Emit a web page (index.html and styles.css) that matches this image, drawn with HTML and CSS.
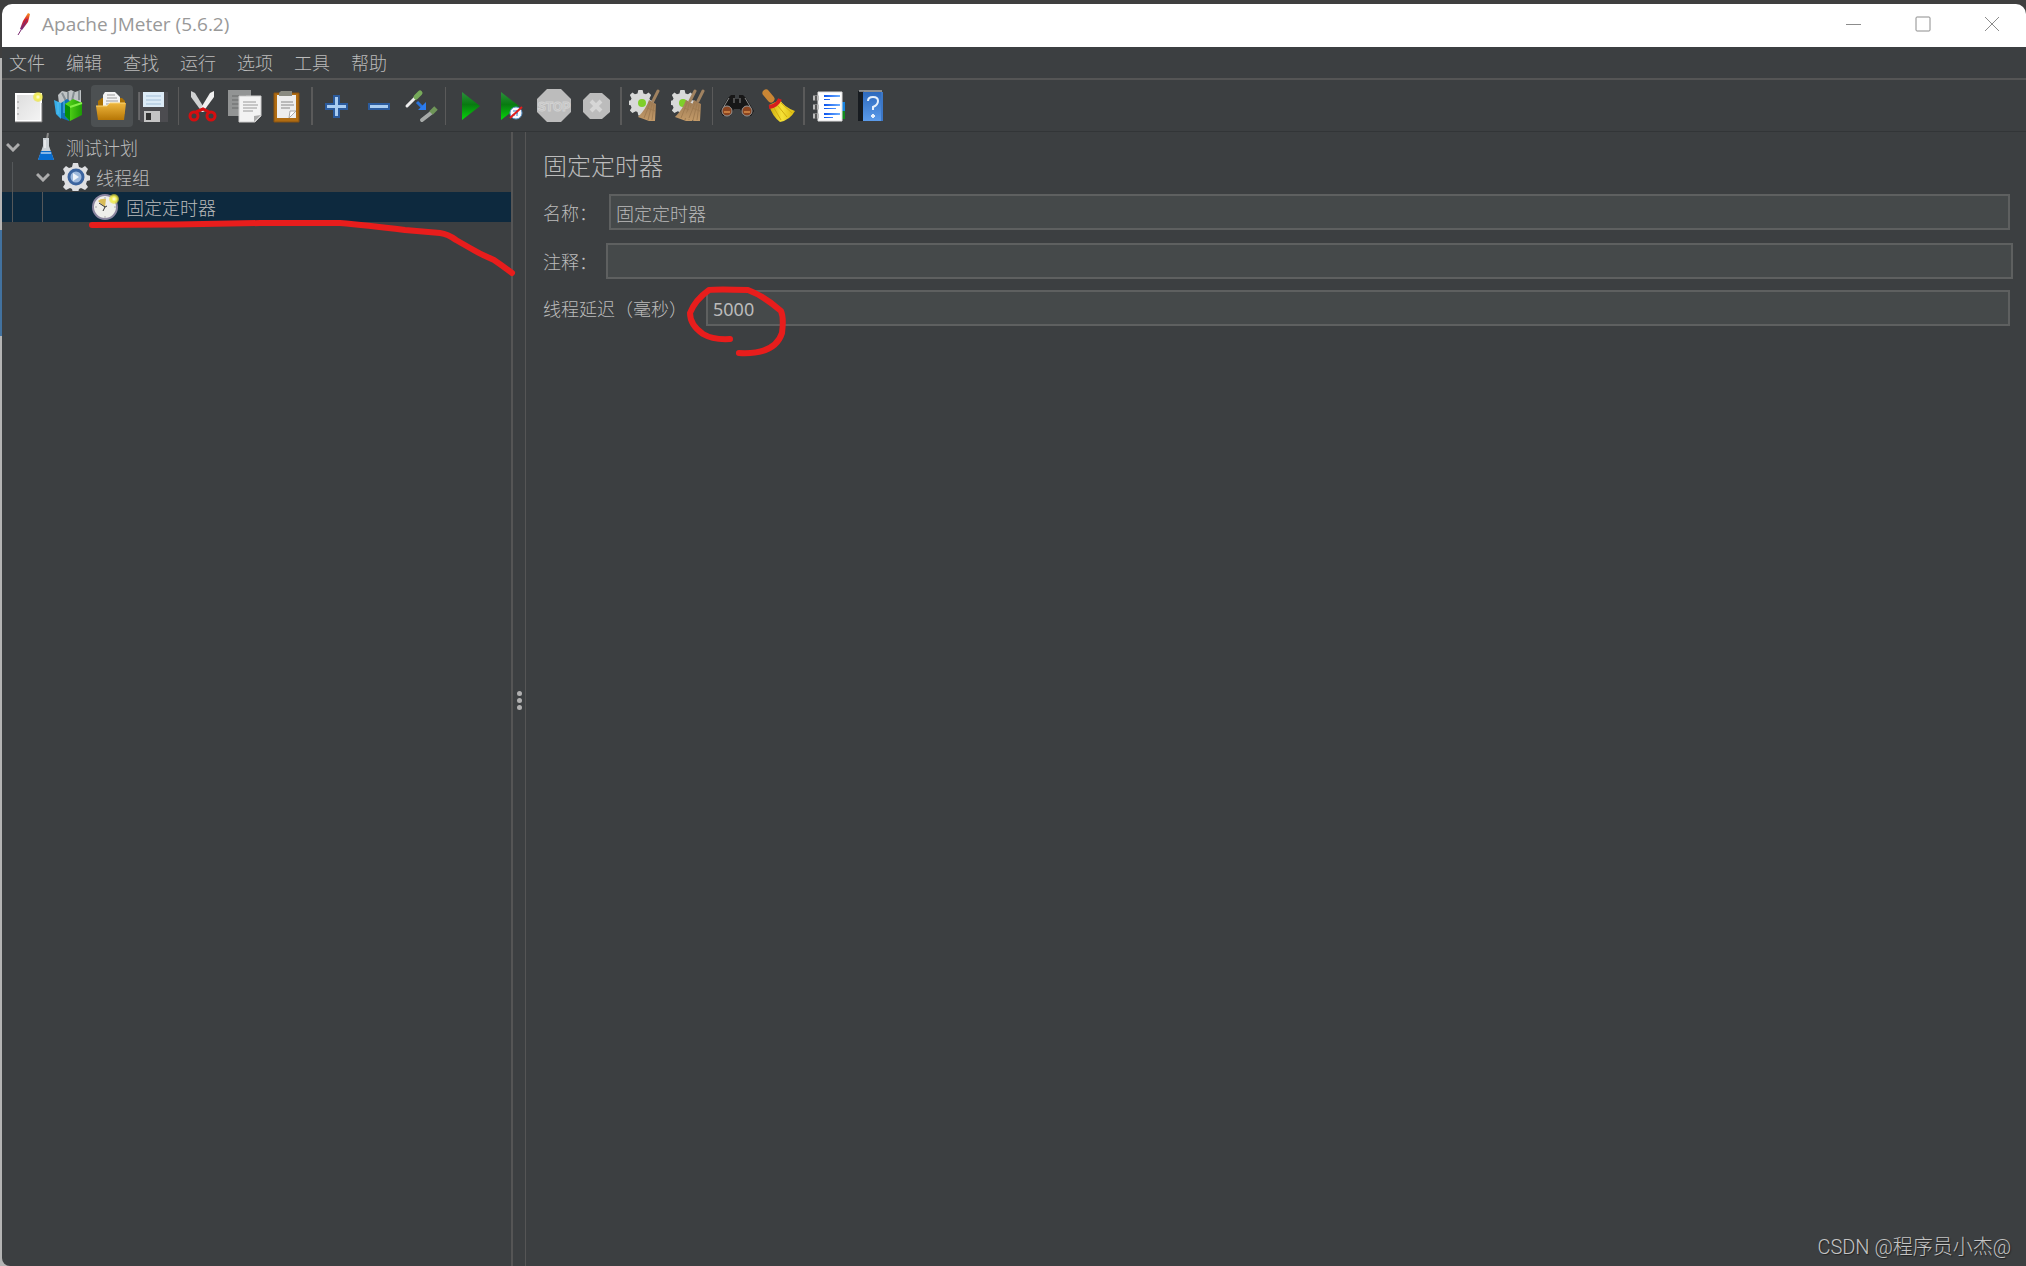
FILE: index.html
```html
<!DOCTYPE html>
<html lang="zh-CN">
<head>
<meta charset="utf-8">
<title>Apache JMeter (5.6.2)</title>
<link rel="stylesheet" href="styles.css">
</head>
<body>
<svg class="defs" aria-hidden="true">
  <defs>
    <linearGradient id="paper" x2="1" y2="1"><stop offset="0" stop-color="#ddd"/><stop offset="1" stop-color="#f4f4f4"/></linearGradient>
    <linearGradient id="gold" x2="0" y2="1"><stop offset="0" stop-color="#efb73e"/><stop offset="1" stop-color="#b67605"/></linearGradient>
    <linearGradient id="green" x2="0" y2="1"><stop offset="0" stop-color="#2c8f3c"/><stop offset=".45" stop-color="#087a10"/><stop offset="1" stop-color="#06d80a"/></linearGradient>
    <linearGradient id="leaf" x2="1" y2="0"><stop offset="0" stop-color="#5fe01c"/><stop offset="1" stop-color="#1d9a05"/></linearGradient>
    <linearGradient id="straw" x2="0" y2="1"><stop offset="0" stop-color="#9c7a55"/><stop offset="1" stop-color="#c39a68"/></linearGradient>
    <linearGradient id="book" x2="0" y2="1"><stop offset="0" stop-color="#2d69bd"/><stop offset="1" stop-color="#5b9bea"/></linearGradient>
    <linearGradient id="flame" x2="0" y2="1"><stop offset="0" stop-color="#f79a23"/><stop offset=".4" stop-color="#d9222a"/><stop offset="1" stop-color="#6d2a7d"/></linearGradient>
    <linearGradient id="line" x2="1" y2="0"><stop offset="0" stop-color="#0a53ee"/><stop offset="1" stop-color="#6fb0ff"/></linearGradient>
    <linearGradient id="yellow" x2="1" y2="0"><stop offset="0" stop-color="#c9a90c"/><stop offset=".5" stop-color="#f6e136"/><stop offset="1" stop-color="#d8b70f"/></linearGradient>
    <radialGradient id="spark"><stop offset="0" stop-color="#fffff0"/><stop offset=".5" stop-color="#f3ee55"/><stop offset="1" stop-color="#e9e030" stop-opacity=".5"/></radialGradient>
    <path id="gear" d="M11 0h5l1 4 3 1 3-2 3 3-2 4 1 2 4 1v4l-4 1-1 3 2 3-3 3-4-2-2 1-1 4h-5l-1-4-2-1-4 2-3-3 2-3-1-3-4-1v-4l4-1 1-2-2-4 3-3 3 2 3-1z"/>
    <g id="broom"><path d="M26 2 21 12" stroke="#a08260" stroke-width="3" stroke-linecap="round"/><path d="M17 11 24 15 23 32H17L6 28Q14 20 17 11z" fill="url(#straw)"/><path d="M18 14 12 29M20 15 16 31M22 16 20 31M15 19 23 22" stroke="#a07c52" fill="none"/></g>
  </defs>
</svg>

<div class="window">
  <header class="titlebar">
    <svg class="feather" width="16" height="24" viewBox="0 0 16 24" aria-hidden="true"><path d="M11 1 13 2 11 10 5 18 3 17 6 9z" fill="url(#flame)"/><path d="M10 7 4 18 1 23" stroke="#7a2a70" stroke-dasharray="10 2" fill="none"/></svg>
    <h1 class="app-title">Apache JMeter (5.6.2)</h1>
    <div class="window-controls">
      <button type="button" aria-label="最小化"><svg width="16" height="16" viewBox="0 0 16 16"><path d="M0 8.500H15"/></svg></button>
      <button type="button" aria-label="最大化"><svg width="16" height="16" viewBox="0 0 16 16"><rect x="1" y="1" width="14" height="14" rx="1"/></svg></button>
      <button type="button" aria-label="关闭"><svg width="16" height="16" viewBox="0 0 16 16"><path d="M1 1 15 15M15 1 1 15"/></svg></button>
    </div>
  </header>

  <nav class="menubar" aria-label="菜单">
    <button type="button">文件</button><button type="button">编辑</button><button type="button">查找</button><button type="button">运行</button><button type="button">选项</button><button type="button">工具</button><button type="button">帮助</button>
  </nav>

  <div class="toolbar" role="toolbar" aria-label="工具栏">
    <button type="button" aria-label="新建"><svg viewBox="0 0 34 34"><path d="M5 5H30V32H5z" fill="url(#paper)" stroke="#fff" stroke-width="2"/><path d="M4 33H31V14" fill="none" stroke="#777"/><path d="M6 13h2M6 19h2M6 25h2" stroke="#999"/><circle cx="27" cy="8" r="5" fill="url(#spark)"/></svg></button>
    <button type="button" aria-label="模板"><svg viewBox="0 0 34 34"><path d="M5 6 9 2 14 3 18 1 22 3 28 1V14L6 15z" fill="#bfc3c5"/><path d="M9 4 13 12M15 3V11M21 3 19 12M26 2V11" stroke="#858d91" stroke-width="2"/><path d="M1 11 8 14V30L3 25z" fill="#37aee8"/><path d="M8 14 14 10 20 14 16 17V32L8 29z" fill="#1271b5"/><path d="M11 12V24M5 13V25" stroke="#54bfee"/><path d="M12 15 20 10 29 14V26L17 32 12 27z" fill="url(#leaf)"/><path d="M12 15 17 18V32L12 27z" fill="#078e0a"/><path d="M17 18 29 14" stroke="#84ef47" stroke-width="2"/></svg></button>
    <button type="button" class="hovered" aria-label="打开"><svg viewBox="0 0 34 34"><path d="M3 12 7 9H27L30 12V25H3z" fill="#a97004"/><path d="M8 6 10 3H20L25 8V20H8z" fill="#f4f4f4"/><path d="M12 6h8M12 9h10M11 12h12M11 15h12" stroke="#9b9b9b"/><path d="M1 17H12L15 14H31L29 31H3z" fill="url(#gold)"/><path d="M1 17H12L15 14H30" stroke="#f8d377" fill="none"/></svg></button>
    <button type="button" aria-label="保存"><svg viewBox="0 0 34 34"><path d="M2 3H31V33H4L2 31z" fill="#4c4c50"/><path d="M6 3H27V18H6z" fill="#dcebf7"/><path d="M9 7H24M9 11H24M9 15H24" stroke="#a3bfd8" stroke-width="1"/><path d="M7 22H23V33H7z" fill="#c4c4c4"/><path d="M9 24h5v7H9z" fill="#333"/><path d="M2 3v28" stroke="#888"/></svg></button>
    <span class="sep"></span>
    <button type="button" aria-label="剪切"><svg viewBox="0 0 34 34"><path d="M5 2 9 4 20 22 16 23 5 8z" fill="#cfd1d1"/><path d="M28 2 24 4 13 22 17 23 28 8z" fill="#f0f0f0"/><g fill="none" stroke="#d50e10" stroke-width="3"><ellipse cx="8" cy="27" rx="4" ry="4"/><ellipse cx="25" cy="27" rx="4" ry="4"/><path d="M10 23 17 20 23 23"/></g></svg></button>
    <button type="button" aria-label="复制"><svg viewBox="0 0 34 34"><path d="M0 1H23V27H0z" fill="#929494"/><path d="M4 7H18M4 11H18M4 15H14M4 19H14" stroke="#686b6b"/><path d="M11 7H33V27L27 33H11z" fill="#f3f3f3" stroke="#ccc"/><path d="M15 13H28M15 16H30M15 19H29M15 22H25" stroke="#9a9a9a"/><path d="M33 26 26 27 26 33z" fill="#aaa"/></svg></button>
    <button type="button" aria-label="粘贴"><svg viewBox="0 0 34 34"><path d="M4 4H29V33H4z" fill="#b06c12" stroke="#885310"/><path d="M7 6H26V29H7z" fill="#eee"/><path d="M11 2H22V7H9V4z" fill="#8a8b82"/><path d="M11 13H23M11 16H24M11 19H20" stroke="#888"/><path d="M26 22 19 29 20 22z" fill="#fff" stroke="#aaa"/></svg></button>
    <span class="sep wide"></span>
    <button type="button" aria-label="全部展开"><svg viewBox="0 0 34 34"><path d="M14 7H19V15H27V20H19V28H14V20H6V15H14z" fill="#a9cdf2" stroke="#2b5b9d" stroke-width="2"/></svg></button>
    <button type="button" aria-label="全部折叠"><svg viewBox="0 0 34 34"><path d="M7 15H27V20H7z" fill="#a9cdf2" stroke="#2b5b9d" stroke-width="2"/></svg></button>
    <button type="button" aria-label="切换"><svg viewBox="0 0 34 34"><path d="M3 17 12 8" stroke="#eee" stroke-width="3" stroke-linecap="round"/><path d="M12 8 16 4" stroke="#77aa5a" stroke-width="5" stroke-linecap="round"/><path d="M18 31 27 24" stroke="#a7aaa8" stroke-width="4" stroke-linecap="round"/><path d="M27 24 32 19" stroke="#6f9658" stroke-width="5"/><path d="M13 13 18 18" stroke="#2672dc" stroke-width="3"/><path d="M22 13V21H14z" fill="#2b7bee"/></svg></button>
    <span class="sep"></span>
    <button type="button" aria-label="启动"><svg viewBox="0 0 34 34"><path d="M9 3 27 17 9 31z" fill="url(#green)"/></svg></button>
    <button type="button" aria-label="不停顿开始"><svg viewBox="0 0 34 34"><path d="M6 3 24 17 6 31z" fill="url(#green)"/><circle cx="21" cy="24" r="6" fill="#f6f8ff" stroke="#5793c8"/><path d="M18 22h4v3M22 21v6M17 26h3" stroke="#367fbf" fill="none"/><path d="M15 29 27 18" stroke="#e21d1d" stroke-width="2"/></svg></button>
    <button type="button" aria-label="停止" disabled><svg viewBox="0 0 34 34"><path d="M10 0H24L34 10V23L24 33H10L0 23V10z" fill="#bcbcbc"/><text class="stop-text" x="17" y="22">STOP</text></svg></button>
    <button type="button" aria-label="关闭" disabled><svg viewBox="0 0 34 34"><path d="M11 4H23L31 11V23L23 30H11L4 23V11z" fill="#bcbcbc"/><path d="M12 12 22 22M22 12 12 22" stroke="#d6d6d6" stroke-width="4"/></svg></button>
    <span class="sep wide"></span>
    <button type="button" aria-label="清除"><svg viewBox="0 0 34 34"><use href="#gear" fill="#d8d9d8" transform="translate(0 1) scale(.85)"/><circle cx="13" cy="14" r="4" fill="#7fcf2a"/><use href="#broom" x="3"/></svg></button>
    <button type="button" aria-label="清除全部"><svg viewBox="0 0 34 34"><use href="#gear" fill="#d8d9d8" transform="translate(0 1) scale(.85)"/><circle cx="12" cy="14" r="4" fill="#7fcf2a"/><use href="#broom" x="-2"/><use href="#broom" x="6"/></svg></button>
    <span class="sep"></span>
    <button type="button" aria-label="查找"><svg viewBox="0 0 34 34"><path d="M8 9 11 6H15V10H19V6H23L26 9 34 22 31 27H24L20 20H14L10 27H3L0 22z" fill="#171717"/><path d="M9 9 3 19M25 9 31 19M14 9V14M20 9V14" stroke="#888"/><circle cx="7" cy="22" r="5" fill="#8a4420" stroke="#999"/><circle cx="27" cy="22" r="5" fill="#8a4420" stroke="#999"/><path d="M4 23h6M24 23h6" stroke="#c57b40" stroke-width="2"/></svg></button>
    <button type="button" aria-label="重置搜索"><svg viewBox="0 0 34 34"><path d="M4 4 9 10" stroke="#ca8634" stroke-width="7" stroke-linecap="round"/><path d="M7 16 18 11Q22 18 33 22 28 31 18 33 10 27 7 16z" fill="url(#yellow)"/><path d="M12 19 19 31M16 17 25 28M19 14 30 24" stroke="#d0ab10"/><path d="M7 18Q15 17 18 10" stroke="#d51e1e" stroke-width="4" fill="none"/></svg></button>
    <span class="sep wide"></span>
    <button type="button" aria-label="函数助手"><svg viewBox="0 0 34 34"><path d="M26 13h7v9h-7z" fill="#1683e0"/><path d="M26 22h7v8h-7z" fill="#128a20"/><path d="M6 3H30V32H6z" fill="#fff" stroke="#ddd"/><path d="M1 9H7M1 18H7M1 27H7" stroke="#bbb" stroke-width="5"/><path d="M4 7v5M4 16v5M4 25v5" stroke="#555" stroke-width="2"/><path d="M12 6H28v2H12zM12 10h6v1h-6zM12 15H28v2H12zM12 19h12v1H12zM12 24H28v2H12zM12 28h9v1h-9z" fill="url(#line)"/></svg></button>
    <button type="button" aria-label="帮助"><svg viewBox="0 0 34 34"><path d="M4 2H10V32H4z" fill="#171b20"/><path d="M9 3H29V32H9z" fill="url(#book)"/><path d="M5 2H28" stroke="#ddd"/><path d="M28 3V32" stroke="#3c77c6" stroke-width="2"/><path d="M14 12Q14 8 19 8T24 12Q24 16 19 18V21M19 25V29M17 27H21" fill="none" stroke="#e5effb" stroke-width="2"/></svg></button>
  </div>

  <main class="workspace">
    <ul class="tree" role="tree" aria-label="测试计划树">
      <li class="node" role="treeitem" aria-expanded="true">
        <svg class="chevron" viewBox="0 0 14 10"><path d="M1 2 7 8 13 2"/></svg>
        <svg class="node-icon" viewBox="0 0 28 28"><path d="M16 0 15 6" stroke="#888" stroke-width="2"/><path d="M11 5H17L17 13 22 27H6L11 13z" fill="#cbd1d5"/><path d="M9 18H19L22 27H6z" fill="#086dcf"/><path d="M13 7V15M9 20H19" stroke="#fff" stroke-width="2" opacity=".5"/></svg>
        <span class="node-label">测试计划</span>
      </li>
      <li class="node level-1" role="treeitem" aria-expanded="true">
        <span class="guide"></span>
        <svg class="chevron" viewBox="0 0 14 10"><path d="M1 2 7 8 13 2"/></svg>
        <svg class="node-icon" viewBox="0 0 28 28"><use href="#gear" fill="#dedfe2"/><circle cx="14" cy="14" r="7" fill="#9db8dc" stroke="#3a639f" stroke-width="3"/><path d="M11 10 17 14 11 18z" fill="#eef3fa"/></svg>
        <span class="node-label">线程组</span>
      </li>
      <li class="node level-2 selected" role="treeitem" aria-selected="true">
        <span class="guide"></span><span class="guide"></span>
        <svg class="node-icon" viewBox="0 0 28 28"><circle cx="13" cy="14" r="12" fill="#eeeeea" stroke="#8c86a0" stroke-width="2"/><path d="M13 14 6 8Q9 5 14 6z" fill="#d9bd59"/><path d="M7 10 13 14 11 18M13 14 15 13" fill="none" stroke="#333"/><path d="M13 4v2M13 23v2M3 14h2M22 14h2" stroke="#aaa"/><circle cx="22" cy="6" r="5" fill="url(#spark)"/></svg>
        <span class="node-label">固定定时器</span>
      </li>
    </ul>
    <div class="divider" role="separator"><i></i><i></i><i></i></div>
    <form class="editor">
      <h2>固定定时器</h2>
      <div class="field name-field"><label for="name">名称：</label><input id="name" type="text" value="固定定时器"></div>
      <div class="field comment-field"><label for="comment">注释：</label><input id="comment" type="text"></div>
      <div class="field delay-field"><label for="delay">线程延迟（毫秒）</label><input id="delay" type="text" value="5000"></div>
    </form>
  </main>
</div>

<svg class="marks" width="800" height="370" viewBox="0 0 800 370" aria-hidden="true">
  <path d="M92 225Q180 225 260 223L340 223Q365 225 405 230L440 233Q448 234 456 240L470 248Q480 254 494 260Q500 264 512 273"/>
  <path d="M730 339Q713 340 703 334Q690 325 690 313Q695 300 709 290Q717 289 748 290Q764 296 781 311Q784 318 782 333Q775 355 739 353"/>
</svg>
<div class="watermark">CSDN @程序员小杰@</div>
</body>
</html>
```
FILE: styles.css
```css
* { box-sizing: border-box; }

body {
  margin: 0;
  min-height: 100vh;
  display: flex;
  padding: 4px 0 0 2px;
  position: relative;
  overflow: hidden;
  background: linear-gradient(#3f3f3f 0 58px, #b4b4b4 58px 230px, #42729f 230px 336px, #b4b4b4 336px);
  color: #bbb;
  font: 18px/24px "Noto Sans", "Noto Sans CJK SC", sans-serif;
}

button, input { font: inherit; color: inherit; }
button { padding: 0; border: 0; background: none; }
.defs { position: absolute; width: 0; height: 0; }

.window {
  flex: 1;
  display: flex;
  flex-direction: column;
  overflow: hidden;
  background: #3c3f41;
  border-radius: 10px 10px 0 8px;
}

/* Desktop strip above the window */
body::before {
  content: "";
  position: absolute;
  inset: 0 0 auto;
  height: 20px;
  background: #3f3f3f;
  z-index: -1;
}

.titlebar {
  display: flex;
  align-items: center;
  height: 43px;
  padding: 0 0 3px 15px;
  background: #fff;
}
.app-title {
  flex: 1;
  margin: 0 0 0 9px;
  color: #999;
  font: 19px/28px "Open Sans", sans-serif;
}
.window-controls { display: flex; }
.window-controls button { display: grid; place-items: center; width: 69px; height: 40px; }
.window-controls svg { fill: none; stroke: #8c8c8c; }

.menubar {
  display: flex;
  gap: 21px;
  height: 33px;
  padding: 0 7px;
  border-bottom: 2px solid #555;
  font-weight: 300;
}

.toolbar {
  display: flex;
  align-items: center;
  height: 52px;
  padding: 0 5px;
  border-bottom: 1px solid #323537;
}
.toolbar button { display: grid; place-items: center; width: 42px; height: 42px; border-radius: 4px; }
.toolbar button.hovered { background: #4c5052; }
.toolbar svg { width: 34px; height: 34px; }
.stop-text { fill: #bcbcbc; stroke: #d2d2d2; stroke-width: 1px; font: bold 12px "Liberation Sans", sans-serif; text-anchor: middle; }
.sep { width: 1px; height: 38px; margin: 0 3px; background: #5a5a5a; }
.sep.wide { width: 2px; }

.workspace { flex: 1; display: flex; }

.tree {
  flex: 0 0 calc(25% + 5px);
  margin: 0;
  padding: 0;
  list-style: none;
  border-right: 2px solid #555;
  font-weight: 300;
}
.node { display: flex; align-items: center; height: 30px; padding-left: 4px; }
.node-label { padding-top: 2px; }
.chevron { width: 14px; height: 10px; margin-right: 12px; fill: none; stroke: #adadad; stroke-width: 3; }
.node-icon { width: 28px; height: 28px; margin-right: 6px; }
.node .guide { align-self: stretch; width: 30px; border-left: 1px solid #55585a; }
.node.level-1, .node.level-2 { padding-left: 10px; }
.level-1 .chevron { margin-left: -6px; }
.level-2 .node-icon { margin-left: 20px; }
.node.selected { background: #0d293e; }

.divider {
  flex: 0 0 13px;
  display: flex;
  flex-direction: column;
  align-items: center;
  justify-content: center;
  gap: 2px;
  padding-top: 3px;
  border-right: 1px solid #555;
}
.divider i { width: 5px; height: 5px; border-radius: 50%; background: #b0b0b0; }

.editor { flex: 1; padding: 19px 16px 0 17px; font-weight: 300; }
.editor h2 { margin: 0 0 13px; font-size: 24px; line-height: 30px; font-weight: 300; }
.field { display: flex; align-items: center; height: 36px; }
.field label { flex: none; padding-top: 2px; }
.field input {
  flex: 1;
  min-width: 0;
  height: 36px;
  padding: 1px 5px 0;
  border: 2px solid #5e6060;
  border-radius: 0;
  background: #45494a;
  outline: none;
}
.name-field { gap: 12px; margin-bottom: 13px; }
.comment-field { gap: 9px; margin: 0 -3px 11px 0; }
.delay-field label { width: 163px; }
.delay-field input { font-weight: 400; }

.marks { position: absolute; left: 0; top: 0; fill: none; stroke: #e81d1c; stroke-width: 6; stroke-linecap: round; stroke-linejoin: round; pointer-events: none; }

.watermark {
  position: absolute;
  right: 15px;
  bottom: 5px;
  color: #c4c4c4;
  font: 20px/28px Roboto, "Noto Sans CJK SC", sans-serif;
  font-weight: 300;
  text-shadow: 1px 1px 1px #222;
}
```
